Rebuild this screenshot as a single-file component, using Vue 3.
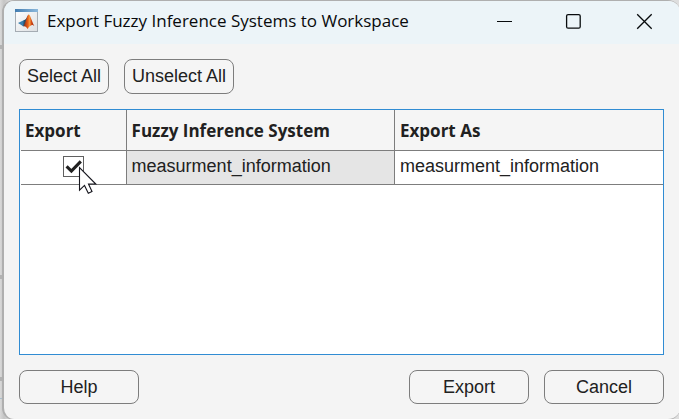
<script setup>
import { ref } from 'vue'

const columns = ['Export', 'Fuzzy Inference System', 'Export As']
const rows = ref([
  { selected: true, system: 'measurment_information', exportAs: 'measurment_information' },
])
function setAll(value) {
  rows.value.forEach((row) => (row.selected = value))
}
</script>

<template>
  <div class="desktop">
    <div class="backdrop"><i class="b1"></i><i class="b2"></i><i class="b3"></i><i class="b4"></i></div>
    <main class="window">
      <header class="titlebar">
        <svg class="logo" width="24" height="24" viewBox="0 0 24 24">
          <defs>
            <linearGradient id="paper" x1="0" y1="0" x2="1" y2="1">
              <stop offset="0" stop-color="#fff" /><stop offset="1" stop-color="#dcdfe2" />
            </linearGradient>
            <linearGradient id="bar" x1="0" x2="1">
              <stop offset="0" stop-color="#427cb0" /><stop offset="1" stop-color="#8db9dc" />
            </linearGradient>
            <linearGradient id="flame" x1="0" x2="1">
              <stop offset="0" stop-color="#7b2616" /><stop offset=".4" stop-color="#e65b16" />
              <stop offset=".58" stop-color="#f5a142" /><stop offset=".7" stop-color="#d94d15" />
              <stop offset="1" stop-color="#92200f" />
            </linearGradient>
          </defs>
          <rect x=".5" y=".5" width="22" height="22" fill="url(#paper)" stroke="#a5acb3" />
          <rect x="0" y="0" width="23" height="3" fill="url(#bar)" />
          <path d="M3 14 8.7 11.2 11 13.4 8.2 17.4 6.3 16.1Z" fill="#377fae" />
          <path d="M8.7 11.2C11 11 12 8 13.6 5.6L11.2 14.5 8.2 17.4Z" fill="#294e69" />
          <path d="M8.2 17.4C10.4 15.6 11.8 6 13.7 5.5 15.4 5.5 17 13.2 19.6 17.5 17.8 15.4 16 15.2 12.6 20 11.5 18.6 10.5 17 8.2 17.4Z" fill="url(#flame)" />
        </svg>
        <h1>Export Fuzzy Inference Systems to Workspace</h1>
        <svg class="controls" width="160" height="18" viewBox="0 0 160 18" fill="none" stroke="#080b0d" stroke-width="1.3">
          <path d="M1 9.5H16" stroke-width="1" />
          <rect x="70.6" y="2.6" width="13.6" height="13.6" rx="1.5" />
          <path d="M141.2 2.2 155.7 16.7M155.7 2.2 141.2 16.7" />
        </svg>
      </header>

      <section class="content">
        <div class="toolbar">
          <button class="select" @click="setAll(true)">Select All</button>
          <button class="unselect" @click="setAll(false)">Unselect All</button>
        </div>

        <div class="grid">
          <div class="line head">
            <div v-for="c in columns" :key="c" class="cell">{{ c }}</div>
          </div>
          <div v-for="row in rows" :key="row.system" class="line row">
            <div class="cell check" @click="row.selected = !row.selected">
              <div class="box">
                <svg v-if="row.selected" width="19" height="19" viewBox="0 0 19 19">
                  <path d="M2.6 9.4 7.4 14 16.8 4.4" fill="none" stroke="#202020" stroke-width="3.1" />
                </svg>
                <svg class="pointer" width="20" height="29" viewBox="0 0 20 29">
                  <path d="M1.5 1.5V24.2L6.5 19.4 10.3 27.2 14 25.5 10.5 18H17.8Z" fill="#fff" stroke="#16161e" stroke-width="1.1" />
                </svg>
              </div>
            </div>
            <div class="cell locked">{{ row.system }}</div>
            <div class="cell">{{ row.exportAs }}</div>
          </div>
        </div>

        <footer class="actions">
          <button>Help</button>
          <div class="pair"><button>Export</button><button>Cancel</button></div>
        </footer>
      </section>
    </main>
  </div>
</template>

<style>
body { margin: 0; overflow: hidden; }
</style>

<style scoped>
* { box-sizing: border-box; }
.desktop {
  position: relative;
  width: 679px;
  height: 419px;
  padding-left: 2px;
  overflow: hidden;
  background: linear-gradient(90deg, #d9d9d9, #c5c5c5 4px, #dedede 12px);
}
.backdrop i { position: absolute; left: 0; width: 4px; height: 4px; background: #b2b2b2; }
.backdrop .b1 { top: 45px; }
.backdrop .b2 { top: 275px; }
.backdrop .b3 { top: 377px; }
.backdrop .b4 { top: 398px; height: 1px; background: #a9bdca; }
.window {
  position: relative;
  width: 678px;
  height: 420px;
  border: 2px solid #afafaf;
  border-width: 1px 0 1px 2px;
  border-radius: 12px;
  background: #f4f4f4;
  overflow: hidden;
}
.titlebar {
  display: flex;
  align-items: center;
  height: 43px;
  padding: 0 24px 3px 11px;
  background: #ecf4f8;
}
.logo { flex: none; }
h1 {
  flex: 1;
  margin: 0 0 0 8px;
  font: 400 17px/24px "Open Sans", "Noto Sans", sans-serif;
  white-space: nowrap;
  color: #080a0c;
}
.controls { flex: none; }
.content { width: 660px; padding: 15px 0 0 15px; }
.toolbar { display: flex; gap: 15px; height: 35px; }
button {
  display: flex;
  align-items: center;
  justify-content: center;
  width: 120px;
  height: 34px;
  padding: 0 0 1px;
  border: 1px solid #7d7d7d;
  border-radius: 8px;
  background: #f5f5f5;
  color: #212121;
  font: 18px/22px "Liberation Sans", Arial, sans-serif;
  white-space: nowrap;
}
.toolbar button { height: 35px; }
.toolbar .select { width: 90px; }
.toolbar .unselect { width: 110px; }
.grid {
  width: 645px;
  height: 246px;
  margin-top: 15px;
  padding-left: 1px;
  border: 1px solid #308cd3;
  background: linear-gradient(#f5f5f5 40px, #fff 40px);
}
.line { display: grid; grid-template-columns: 106px 268px 1fr; border-bottom: 1px solid #7d7d7d; }
.head { height: 41px; background: #f5f5f5; }
.row { height: 34px; }
.cell {
  display: flex;
  align-items: center;
  padding: 0 0 3px 5px;
  border-right: 1px solid #7d7d7d;
  color: #212121;
  font: 18px/22px "Liberation Sans", Arial, sans-serif;
  white-space: nowrap;
}
.cell:last-child { border-right: 0; }
.cell:first-child { padding-left: 4px; }
.cell:nth-child(2) { padding-left: 4.6px; }
.head .cell { padding-top: 2px; padding-bottom: 0; font: 700 17px/24px "Open Sans", "Noto Sans", sans-serif; }
.row .check { justify-content: center; padding-left: 0; }
.locked { background: #e5e5e5; }
.box { position: relative; width: 21px; height: 21px; border: 1px solid #606060; background: #fff; }
.box svg { display: block; }
.box .pointer { position: absolute; left: 14px; top: 9px; z-index: 2; }
.actions { display: flex; justify-content: space-between; width: 645px; margin-top: 15px; }
.pair { display: flex; gap: 15px; }
</style>
